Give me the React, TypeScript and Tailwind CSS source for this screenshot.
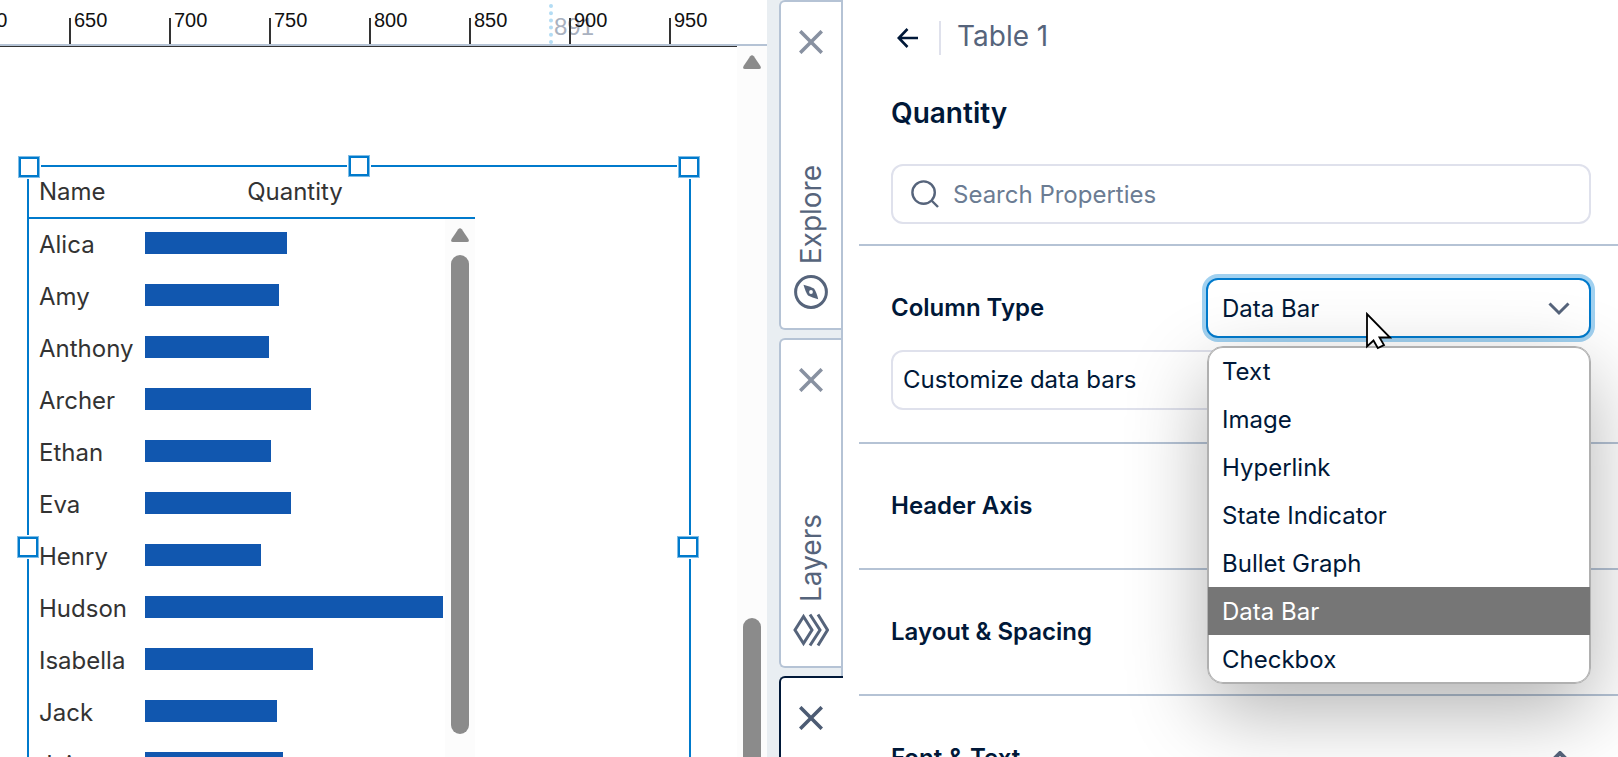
import * as React from "react";

const TICKS = [600, 650, 700, 750, 800, 850, 900, 950];

const ROWS = [
  { name: "Alica", quantity: 142 },
  { name: "Amy", quantity: 134 },
  { name: "Anthony", quantity: 124 },
  { name: "Archer", quantity: 166 },
  { name: "Ethan", quantity: 126 },
  { name: "Eva", quantity: 146 },
  { name: "Henry", quantity: 116 },
  { name: "Hudson", quantity: 298 },
  { name: "Isabella", quantity: 168 },
  { name: "Jack", quantity: 132 },
  { name: "Jain", quantity: 138 },
];

const MAX_QUANTITY = Math.max(...ROWS.map((r) => r.quantity));

const COLUMN_TYPES = [
  "Text",
  "Image",
  "Hyperlink",
  "State Indicator",
  "Bullet Graph",
  "Data Bar",
  "Checkbox",
];

export default function App() {
  return (
    <div className="flex h-screen overflow-hidden bg-white font-[Inter,sans-serif] text-2xl text-[#001838]">
      <Canvas />
      <TabRail />
      <PropertiesPanel />
    </div>
  );
}

function Canvas() {
  return (
    <main className="flex min-w-0 flex-1 flex-col overflow-hidden">
      <Ruler />
      <div className="flex min-h-0 flex-1">
        <div className="min-w-0 flex-1 border-t border-[#333] pt-[118px] pl-[27px]">
          <SelectedTable />
        </div>
        <div className="flex w-[30px] shrink-0 flex-col items-center bg-[#fcfcfc] pt-[9px]">
          <ScrollArrow />
          <div className="mt-[549px] h-[480px] w-[18px] shrink-0 rounded-full bg-[#8b8b8b]" />
        </div>
      </div>
    </main>
  );
}

function Ruler() {
  return (
    <div className="relative h-[46px] shrink-0 overflow-hidden border-b-2 border-[#b5c3d5] font-['Liberation_Sans',Arial,sans-serif]">
      {/* pointer guide, painted under the tick labels */}
      <div className="absolute top-1 left-[549px] h-10 border-l-4 border-dotted border-[#b3dcf4]" />
      <span className="absolute top-[13px] left-[554px] text-2xl leading-7 text-[#a9b1c0]">891</span>
      <div className="-ml-[31px] flex items-end pt-2">
        {TICKS.map((tick) => (
          <div key={tick} className="relative w-[100px] shrink-0 pl-[5px] text-xl leading-6 text-[#111]">
            <span className="absolute top-[10px] left-0 h-[26px] w-[2px] bg-[#333]" />
            {tick}
          </div>
        ))}
      </div>
    </div>
  );
}

function SelectedTable() {
  return (
    <div className="relative h-[764px] w-[664px] border-2 border-[#007acc] text-[#333]">
      <div className="flex w-[446px]">
        <table className="w-[416px] table-fixed border-separate border-spacing-0 text-left">
          <thead>
            <tr className="h-[52px]">
              <th className="w-[116px] border-b-2 border-[#007acc] p-0 pl-[10px] font-normal">Name</th>
              <th className="border-b-2 border-[#007acc] p-0 text-center font-normal">Quantity</th>
            </tr>
          </thead>
          <tbody>
            {ROWS.map((row) => (
              <tr key={row.name} className="h-[52px]">
                <td className="p-0 pl-[10px]">{row.name}</td>
                <td className="p-0 pr-[2px] pb-1">
                  <div
                    className="h-[22px] bg-[#1157af]"
                    style={{ width: `${(row.quantity / MAX_QUANTITY) * 100}%` }}
                  />
                </td>
              </tr>
            ))}
          </tbody>
        </table>
        <div className="flex w-[30px] flex-col">
          <div className="h-[52px] border-b-2 border-[#007acc]" />
          <div className="flex flex-1 flex-col items-center bg-[#fcfcfc] pt-[9px]">
            <ScrollArrow />
            <div className="mt-[13px] h-[479px] w-[18px] rounded-full bg-[#8b8b8b]" />
          </div>
        </div>
      </div>

      <Handle className="-top-[10px] -left-[10px]" />
      <Handle className="-top-[11px] left-[320px]" />
      <Handle className="-top-[10px] -right-[10px]" />
      <Handle className="top-[370px] -left-[11px]" />
      <Handle className="top-[370px] -right-[9px]" />
    </div>
  );
}

function Handle({ className }: { className: string }) {
  return (
    <span
      className={`absolute size-5 border-2 border-[#007acc] bg-white shadow-[0_0_0_1px_#80bde6,0_0_0_2px_#fff] ${className}`}
    />
  );
}

function ScrollArrow() {
  return (
    <svg className="shrink-0" width="18" height="14" viewBox="0 0 18 14" fill="#8b8b8b" aria-hidden="true">
      <path d="M7.2 1.2Q9-.9 10.8 1.2L17.4 11Q18.8 14 16 14H2Q-.8 14 .6 11Z" />
    </svg>
  );
}

function TabRail() {
  return (
    <nav className="flex w-[76px] shrink-0 flex-col gap-2 border-r-2 border-[#b5c3d5] bg-[#e9eef2] pl-3">
      <RailTab label="Explore" icon={<CompassIcon />} />
      <RailTab label="Layers" icon={<LayersIcon />} />
      <div className="-mr-[2px] h-[330px] shrink-0 rounded-l-md border-2 border-r-0 border-[#001838] bg-white pt-7 pl-[18px] text-[#4c5b73]">
        <button type="button" aria-label="Close" className="block">
          <CloseIcon />
        </button>
      </div>
    </nav>
  );
}

function RailTab({ label, icon }: { label: string; icon: React.ReactNode }) {
  return (
    <div className="flex h-[330px] shrink-0 flex-col items-center justify-between rounded-l-md border-2 border-r-0 border-[#b5c3d5] bg-white pt-7 pb-[19px] text-[#56647b]">
      <button type="button" aria-label={`Close ${label}`} className="text-[#8891a1]">
        <CloseIcon />
      </button>
      <button type="button" className="flex flex-col items-center gap-[11px] text-[28px] leading-9">
        <span className="rotate-180 [writing-mode:vertical-rl]">{label}</span>
        {icon}
      </button>
    </div>
  );
}

function CloseIcon() {
  return (
    <svg width="24" height="24" viewBox="0 0 24 24" stroke="currentColor" strokeWidth="3.6" aria-hidden="true">
      <path d="M1.200 1.200l21.600 21.600M22.800 1.200L1.200 22.800" />
    </svg>
  );
}

function CompassIcon() {
  return (
    <svg width="34" height="34" viewBox="0 0 34 34" aria-hidden="true">
      <circle cx="17" cy="17" r="15.4" fill="none" stroke="currentColor" strokeWidth="3" />
      <path d="M9.500 9.700Q16 11.500 20 13.500Q22.500 17 24.200 24.200Q18 22.500 14 20.500Q11.500 17 9.500 9.700z" fill="currentColor" />
      <circle cx="17" cy="17" r="1.9" fill="#fff" />
    </svg>
  );
}

function LayersIcon() {
  return (
    <svg width="36" height="34" viewBox="0 0 36 34" fill="none" stroke="currentColor" strokeWidth="3" aria-hidden="true">
      <path d="M10.500 3.500L2 17l8.500 13.500L19 17z" />
      <path d="M17 1.500L27 17l-10 15.500M25 1.500L34.500 17l-9.500 15.500" />
    </svg>
  );
}

function PropertiesPanel() {
  return (
    <aside className="w-[775px] shrink-0 overflow-hidden pl-4">
      <header className="border-b-2 border-[#b5c3d5] pr-[27px] pb-5 pl-8">
        <div className="flex items-center gap-4 pt-[21px] text-[28px] leading-[34px]">
          <button type="button" aria-label="Back" className="pr-[5px] pl-[6px]">
            <svg width="21" height="20" viewBox="0 0 21 20" fill="none" stroke="currentColor" strokeWidth="2.6" aria-hidden="true">
              <path d="M21 10H2M10.500 1L1.800 10l8.700 9" />
            </svg>
          </button>
          <span className="h-[34px] w-[2px] bg-[#dfe1ec]" />
          <span className="-mt-1 text-[#56647b]">Table 1</span>
        </div>
        <h2 className="mt-10 text-[28px] leading-9 font-semibold">Quantity</h2>
        <label className="mt-[33px] flex h-[60px] items-center gap-[14px] rounded-xl border-2 border-[#dfe1ec] px-[18px]">
          <SearchIcon />
          <input
            type="text"
            aria-label="Search Properties"
            placeholder="Search Properties"
            className="min-w-0 flex-1 pt-0.5 outline-none placeholder:text-[#6b7c93]"
          />
        </label>
      </header>

      <section className="border-b-2 border-[#b5c3d5] py-8 pr-[27px] pl-8">
        <div className="flex items-center justify-between">
          <label htmlFor="column-type" className="font-semibold">
            Column Type
          </label>
          <div className="relative w-[385px]">
            <select
              id="column-type"
              defaultValue="Data Bar"
              className="block h-[60px] w-full appearance-none rounded-xl border-2 border-[#007acc] bg-white px-[14px] pt-0.5 shadow-[0_0_0_4px_#a1d1f0] outline-none"
            >
              {COLUMN_TYPES.map((type) => (
                <option key={type}>{type}</option>
              ))}
            </select>
            <svg
              className="pointer-events-none absolute top-6 right-[21px] text-[#56647b]"
              width="22"
              height="14"
              viewBox="0 0 22 14"
              fill="none"
              stroke="currentColor"
              strokeWidth="3"
              aria-hidden="true"
            >
              <path d="M1.500 1.500L11 11l9.500-9.500" />
            </svg>
            <TypeMenu />
            <CursorIcon />
          </div>
        </div>
        <button
          type="button"
          className="mt-3 h-[60px] w-full rounded-xl border-2 border-[#dfe1ec] px-[10px] text-left"
        >
          Customize data bars
        </button>
      </section>

      <SectionHeading title="Header Axis" />
      <SectionHeading title="Layout & Spacing" />
      <SectionHeading title="Font & Text" open />
    </aside>
  );
}

function TypeMenu() {
  return (
    <ul
      role="listbox"
      aria-label="Column Type"
      className="absolute top-[68px] right-0 left-px z-10 overflow-hidden rounded-2xl border border-[#b0b0b0] bg-white shadow-[inset_0_0_0_1px_#b0b0b0,0_28px_80px_rgba(0,0,0,0.3)]"
    >
      {COLUMN_TYPES.map((type) => (
        <li
          key={type}
          role="option"
          aria-selected={type === "Data Bar"}
          className="h-12 pl-[14px] leading-[50px] aria-selected:bg-[#767676] aria-selected:text-white"
        >
          {type}
        </li>
      ))}
    </ul>
  );
}

function SectionHeading({ title, open }: { title: string; open?: boolean }) {
  return (
    <section className="flex h-[126px] items-center justify-between border-b-2 border-[#b5c3d5] pr-[46px] pl-8">
      <h3 className="font-semibold">{title}</h3>
      {open && (
        <svg width="24" height="14" viewBox="0 0 24 14" fill="none" stroke="#56647b" strokeWidth="4" aria-hidden="true">
          <path d="M1.500 12.500L12 2l10.500 10.500" />
        </svg>
      )}
    </section>
  );
}

function SearchIcon() {
  return (
    <svg width="28" height="28" viewBox="0 0 28 28" fill="none" stroke="#56647b" strokeWidth="2.4" aria-hidden="true">
      <circle cx="12.600" cy="12.600" r="11.200" />
      <path d="M20.500 20.500l6.500 6.500" />
    </svg>
  );
}

function CursorIcon() {
  return (
    <svg
      className="pointer-events-none absolute top-[33px] left-[159px] z-20"
      width="27"
      height="39"
      viewBox="0 0 27 39"
      fill="#fff"
      stroke="#000"
      strokeWidth="1.8"
      aria-hidden="true"
    >
      <path d="M2 3V35.500L8.500 29.500L12.800 37L19 34L14.500 26.500H25Z" />
    </svg>
  );
}
